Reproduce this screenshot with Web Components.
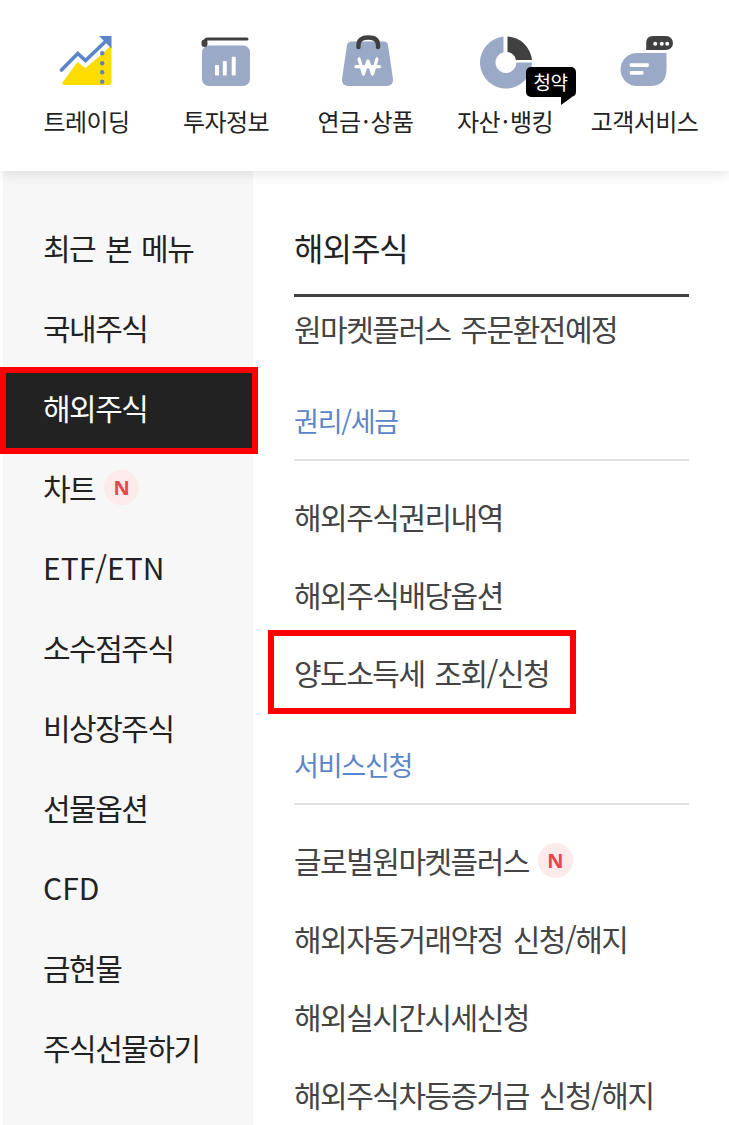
<!DOCTYPE html>
<html lang="ko">
<head>
<meta charset="utf-8">
<style>
html, body { margin: 0; height: 100%; background: #fff; overflow: hidden; }
body { font-family: "Noto Sans CJK KR", "Noto Sans", sans-serif; }
</style>
</head>
<body>
<app-shell>
    <top-nav slot="top">
        <nav-tile label="트레이딩"><svg viewBox="0 0 56 56" width="56" height="56"><path d="M3.500 48.500 L18.500 28 L26.500 34 L43 20 L52.500 11 V48 Q52.500 51 49.500 51 H5.500 Q3 51 3.500 48.500Z" fill="#ffdc00"/><path d="M2.500 36 L18.800 19.500 L26.500 26.500 L48 6" fill="none" stroke="#5b85c9" stroke-width="3.600" stroke-linecap="round"/><path d="M40 2 H52.500 V14.500 Z" fill="#5b85c9"/><g fill="#5b85c9"><circle cx="43.200" cy="19.300" r="2.200"/><circle cx="43.200" cy="29.300" r="2.200"/><circle cx="43.200" cy="38.300" r="2.200"/><circle cx="43.200" cy="47.700" r="2.200"/></g></svg></nav-tile>
        <nav-tile label="투자정보"><svg viewBox="0 0 56 56" width="56" height="56"><rect x="4" y="11.500" width="48" height="40.500" rx="7" fill="#9aa9c6"/><path d="M7 10 V8 Q7 5 10 5 H49" fill="none" stroke="#404040" stroke-width="3" stroke-linecap="round"/><path d="M6.500 10 V8.500" stroke="#404040" stroke-width="6" stroke-linecap="round"/><g fill="#fff"><rect x="17" y="31" width="4" height="10.500" rx=".8"/><rect x="24.800" y="27" width="4" height="14.500" rx=".8"/><rect x="33.700" y="22.700" width="4" height="18.800" rx=".8"/></g></svg></nav-tile>
        <nav-tile label="연금·상품"><svg viewBox="0 0 56 56" width="56" height="56"><path d="M14 7.500 H46 Q49.500 7.500 50 11 L55 45 Q55.500 52 48.500 52 H10.500 Q3.500 52 4 45 L9 11 Q9.500 7.500 14 7.500Z" fill="#9aa9c6"/><path d="M20.500 13 V11 Q20.500 3.500 30 3.500 Q40 3.500 40 11 V13" fill="none" stroke="#404040" stroke-width="4.400" stroke-linecap="round"/><path d="M21 25 L25.500 40 L30 27 L34.500 40 L39 25 M18 32.700 H41.500" fill="none" stroke="#fff" stroke-width="3.200" stroke-linecap="round" stroke-linejoin="round"/></svg></nav-tile>
        <nav-tile label="자산·뱅킹" badge="청약"><svg viewBox="0 0 56 56" width="56" height="56"><path d="M26.500 2.600 A26 26 0 1 0 55 28.500 H39.500 A10.500 10.500 0 1 1 26.500 18.300Z" fill="#9aa9c6"/><path d="M30.500 2.500 A26 26 0 0 1 55 26 H39 A10.500 10.500 0 0 0 30.500 18Z" fill="#404040"/></svg></nav-tile>
        <nav-tile label="고객서비스"><svg viewBox="0 0 56 56" width="56" height="56"><path d="M20 19 H49.500 V35 Q49.500 52 33 52 H20 A16.500 16.500 0 0 1 20 19Z" fill="#9aa9c6"/><path d="M29.200 16 V9 Q29.200 2 36 2 H49 A7 7 0 0 1 49 16 Z" fill="#404040"/><g fill="#fff"><circle cx="38.200" cy="9.700" r="2"/><circle cx="44.800" cy="9.700" r="2"/><circle cx="50.200" cy="9.700" r="2"/><rect x="12.800" y="29.300" width="19" height="3.800" rx="1"/><rect x="12.800" y="37" width="13.700" height="3.800" rx="1"/></g></svg></nav-tile>
    </top-nav>
    <side-menu slot="side">
        <side-item>최근 본 메뉴</side-item>
        <side-item>국내주식</side-item>
        <side-item active>해외주식</side-item>
        <side-item>차트<new-badge></new-badge></side-item>
        <side-item latin>ETF/ETN</side-item>
        <side-item>소수점주식</side-item>
        <side-item>비상장주식</side-item>
        <side-item>선물옵션</side-item>
        <side-item latin>CFD</side-item>
        <side-item>금현물</side-item>
        <side-item>주식선물하기</side-item>
    </side-menu>
    <detail-panel slot="main">
        <panel-title>해외주식</panel-title>
        <panel-link>원마켓플러스 주문환전예정</panel-link>
        <panel-group>권리/세금</panel-group>
        <panel-link>해외주식권리내역</panel-link>
        <panel-link>해외주식배당옵션</panel-link>
        <panel-link marked>양도소득세 조회/신청</panel-link>
        <panel-group>서비스신청</panel-group>
        <panel-link>글로벌원마켓플러스<new-badge></new-badge></panel-link>
        <panel-link>해외자동거래약정 신청/해지</panel-link>
        <panel-link>해외실시간시세신청</panel-link>
        <panel-link>해외주식차등증거금 신청/해지</panel-link>
    </detail-panel>
</app-shell>
<script>
class BaseElement extends HTMLElement {
    constructor() {
        super();
        this.attachShadow({ mode: "open" });
        this.shadowRoot.innerHTML = this.markup();
    }
}

class AppShell extends BaseElement {
    markup() {
        return `<style>
        :host { display: flex; flex-direction: column; height: 1125px; overflow: hidden; }
        .body { flex: 1; display: flex; padding-left: 3px; min-height: 0; }
        </style><slot name="top"></slot><div class="body"><slot name="side"></slot><slot name="main"></slot></div>`;
    }
}

class TopNav extends BaseElement {
    markup() {
        return `<style>
        :host { display: flex; justify-content: space-between; box-sizing: border-box; height: 171px; padding: 34px 41px 0 43px; background: #fff; box-shadow: 0 2px 14px rgba(0,0,0,.12); position: relative; z-index: 1; }
        </style><slot></slot>`;
    }
}

class NavTile extends BaseElement {
    markup() {
        return `<style>
        :host { display: flex; flex-direction: column; align-items: center; position: relative; width: 87px; }
        .ico { height: 56px; display: flex; justify-content: center; }
        .label { margin-top: 15px; font-size: 24px; line-height: 32px; letter-spacing: -0.6px; color: #222; white-space: nowrap; }
        .dot { margin: 0 2px; }
        .badge { position: absolute; left: 64px; top: 33px; background: #000; color: #fff; font-size: 19px; letter-spacing: -0.5px; line-height: 30px; width: 50px; height: 30px; text-align: center; border-radius: 5px; white-space: nowrap; }
        .badge::after { content: ""; position: absolute; left: 35px; bottom: -8px; border-right: 11px solid transparent; border-top: 8px solid #000; }
        </style><div class="ico"><slot></slot></div><div class="label"></div>`;
    }
    connectedCallback() {
        const label = this.shadowRoot.querySelector(".label");
        this.getAttribute("label").split("·").forEach((part, i) => {
            if (i > 0) {
                const dot = document.createElement("span");
                dot.className = "dot";
                dot.textContent = "·";
                label.appendChild(dot);
            }
            label.appendChild(document.createTextNode(part));
        });
        const badge = this.getAttribute("badge");
        if (badge) {
            const el = document.createElement("div");
            el.className = "badge";
            el.textContent = badge;
            this.shadowRoot.appendChild(el);
        }
    }
}

class SideMenu extends BaseElement {
    markup() {
        return `<style>
        :host { display: block; box-sizing: border-box; width: 250px; flex: none; padding-top: 36px; background: #f7f7f7; }
        </style><slot></slot>`;
    }
}

class SideItem extends BaseElement {
    markup() {
        return `<style>
        :host { display: flex; align-items: center; box-sizing: border-box; height: 80px; padding-left: 40px; font-size: 30px; letter-spacing: -1.5px; word-spacing: 3px; color: #222; white-space: nowrap; position: relative; }
        :host([latin]) { letter-spacing: 0; }
        :host([active]) { color: #fff; z-index: 1; }
        :host([active])::before { content: ""; position: absolute; z-index: -1; left: -3px; top: 0; width: 258px; height: 87px; box-sizing: border-box; border: 6px solid #f00; background: #222; }
        </style><slot></slot>`;
    }
}

class DetailPanel extends BaseElement {
    markup() {
        return `<style>
        :host { display: block; flex: 1; box-sizing: border-box; padding: 37px 40px 0 41px; }
        </style><slot></slot>`;
    }
}

class PanelTitle extends BaseElement {
    markup() {
        return `<style>
        :host { display: flex; align-items: center; box-sizing: border-box; height: 89px; margin-bottom: -8px; padding-bottom: 9px; border-bottom: 3px solid #404040; font-size: 32px; letter-spacing: -1px; color: #222; }
        </style><slot></slot>`;
    }
}

class PanelGroup extends BaseElement {
    markup() {
        return `<style>
        :host { display: flex; align-items: center; box-sizing: border-box; height: 94px; margin-bottom: 16px; padding-top: 14px; border-bottom: 2px solid #e2e2e2; font-size: 27px; letter-spacing: -1.2px; color: #5b85c9; }
        </style><slot></slot>`;
    }
}

class PanelLink extends BaseElement {
    markup() {
        return `<style>
        :host { display: flex; align-items: center; position: relative; height: 78px; font-size: 30px; letter-spacing: -1.5px; word-spacing: 3px; color: #444; white-space: nowrap; }
        :host([marked])::after { content: ""; position: absolute; left: -26px; top: -3px; width: 296px; height: 72px; border: 6px solid #f00; }
        </style><slot></slot>`;
    }
}

class NewBadge extends BaseElement {
    markup() {
        return `<style>
        :host { display: inline-flex; align-items: center; justify-content: center; width: 35px; height: 35px; margin-left: 9px; border-radius: 50%; background: #fdeaea; color: #e8474c; font: 700 20px "Noto Sans", sans-serif; letter-spacing: 0; }
        </style>N`;
    }
}

customElements.define("app-shell", AppShell);
customElements.define("top-nav", TopNav);
customElements.define("nav-tile", NavTile);
customElements.define("side-menu", SideMenu);
customElements.define("side-item", SideItem);
customElements.define("detail-panel", DetailPanel);
customElements.define("panel-title", PanelTitle);
customElements.define("panel-group", PanelGroup);
customElements.define("panel-link", PanelLink);
customElements.define("new-badge", NewBadge);
</script>
</body>
</html>
